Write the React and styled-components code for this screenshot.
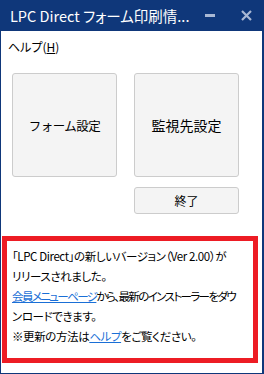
import React from "react";
import styled, { createGlobalStyle } from "styled-components";

const GlobalStyle = createGlobalStyle`
  html, body {
    margin: 0;
    padding: 0;
    background: #ffffff;
  }
  body {
    font-family: "Noto Sans CJK JP", "Noto Sans", sans-serif;
    font-feature-settings: "palt";
  }
`;

const Window = styled.div`
  width: 264px;
  height: 374px;
  box-sizing: border-box;
  border: 1px solid #0f377a;
  border-top: none;
  border-right-width: 2px;
  display: flex;
  flex-direction: column;
  background: #ffffff;
`;

const TitleBar = styled.div`
  height: 31px;
  margin: 0 -2px 0 -1px;
  background: #0f377a;
  display: flex;
  align-items: center;
  padding-left: 10px;
`;

const Title = styled.div`
  flex: 1;
  color: #ffffff;
  font-size: 14.5px;
  white-space: nowrap;
`;

const Control = styled.div`
  width: 36px;
  height: 31px;
  display: flex;
  align-items: center;
  justify-content: center;
`;

const MenuBar = styled.div`
  height: 26px;
  padding: 2px 0 0 7px;
  display: flex;
  align-items: center;
  font-size: 12px;
  color: #000000;
`;

const Underlined = styled.span`
  text-decoration: underline;
`;

const Content = styled.div`
  padding: 14px 0 0 11px;
  display: grid;
  grid-template-columns: 105px 105px;
  column-gap: 17px;
  row-gap: 10px;
`;

const BigButton = styled.button`
  height: ${(p) => p.$h}px;
  grid-column: ${(p) => p.$col || "auto"};
  background: #f4f4f4;
  border: 1px solid #cccccc;
  border-radius: 3px;
  font-family: inherit;
  font-size: ${(p) => p.$size}px;
  letter-spacing: ${(p) => p.$ls || 0}px;
  color: #000000;
  padding: 0;
`;

const Notice = styled.div`
  margin: 22px 0 0 1px;
  width: 256px;
  height: 127px;
  box-sizing: border-box;
  border: 5px solid #ed1c24;
  padding: 5px 0 0 5px;
  font-size: 11.5px;
  line-height: 20px;
  color: #000000;
  overflow: hidden;
`;

const Line = styled.div`
  white-space: nowrap;
  letter-spacing: ${(p) => p.$ls ?? -0.4}px;
`;

const Link = styled.a`
  color: #1a6fd6;
  text-decoration: underline;
`;

export default function App() {
  return (
    <>
      <GlobalStyle />
      <Window>
        <TitleBar>
          <Title>LPC Direct フォーム印刷情...</Title>
          <Control>
            <svg width="10" height="3" viewBox="0 0 10 3">
              <rect width="10" height="3" fill="#a9b8d4" />
            </svg>
          </Control>
          <Control>
            <svg width="11" height="11" viewBox="0 0 11 11">
              <path d="M1 1 L10 10 M10 1 L1 10" stroke="#a9b8d4" strokeWidth="2.2" />
            </svg>
          </Control>
        </TitleBar>
        <MenuBar>
          ヘルプ(<Underlined>H</Underlined>)
        </MenuBar>
        <Content>
          <BigButton $h={104} $size={12.5} $ls={-0.5}>フォーム設定</BigButton>
          <BigButton $h={104} $size={14}>監視先設定</BigButton>
          <BigButton $h={27} $size={12} $col="2">終了</BigButton>
        </Content>
        <Notice>
          <Line>「LPC Direct」の新しいバージョン（Ver 2.00）が</Line>
          <Line>リリースされました。</Line>
          <Line $ls={-1.6}>
            <Link>会員メニューページ</Link>から、最新のインストーラーをダウ
          </Line>
          <Line>ンロードできます。</Line>
          <Line>
            ※更新の方法は<Link>ヘルプ</Link>をご覧ください。
          </Line>
        </Notice>
      </Window>
    </>
  );
}
